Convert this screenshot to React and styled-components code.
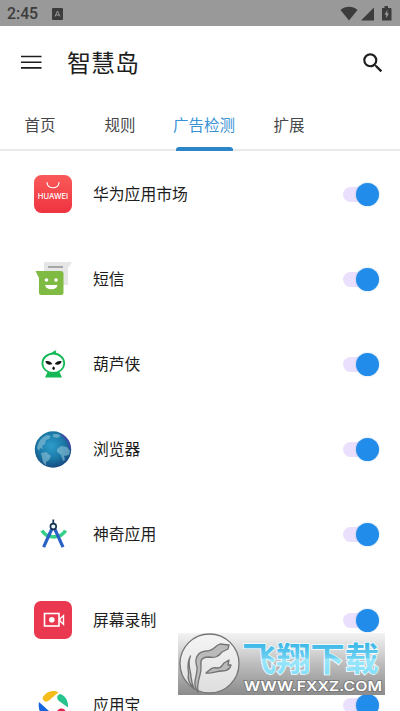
import React, { useState } from "react";
import styled, { createGlobalStyle } from "styled-components";
import { MdSearch } from "react-icons/md";

const tabs = [
  { name: "首页", width: 80 },
  { name: "规则", width: 80 },
  { name: "广告检测", width: 88 },
  { name: "扩展", width: 82 },
];

const apps = [
  { name: "华为应用市场", Icon: HuaweiIcon },
  { name: "短信", Icon: MessageIcon },
  { name: "葫芦侠", Icon: GourdIcon },
  { name: "浏览器", Icon: GlobeIcon },
  { name: "神奇应用", Icon: CompassIcon },
  { name: "屏幕录制", Icon: RecorderIcon },
  { name: "应用宝", Icon: StoreIcon },
];

function HuaweiIcon() {
  return (
    <svg width="40" height="40" viewBox="0 0 40 40">
      <defs>
        <linearGradient id="hw" x1="0" y1="0" x2="0" y2="1">
          <stop offset="0" stopColor="#fa5a59" />
          <stop offset="1" stopColor="#ee3340" />
        </linearGradient>
      </defs>
      <rect x="1" y="1" width="38" height="38" rx="7.5" fill="url(#hw)" />
      <path
        d="M14 8.5c.6 7 11.4 7 12 0"
        fill="none"
        stroke="#fff"
        strokeWidth="1.2"
        strokeLinecap="round"
      />
      <text
        x="4.8"
        y="25.2"
        textLength="30.4"
        lengthAdjust="spacingAndGlyphs"
        fontFamily="Inter, sans-serif"
        fontSize="7"
        fontWeight="500"
        fill="#fff"
      >
        HUAWEI
      </text>
    </svg>
  );
}

function MessageIcon() {
  return (
    <svg width="40" height="40" viewBox="0 0 40 40">
      <path d="M11 3h28l-4 6v17H11z" fill="#e6e6e6" />
      <path d="M15 8h15" stroke="#a6a6a6" strokeWidth="2" />
      <path
        d="M2.5 12h25.5a2.5 2.5 0 0 1 2.5 2.5v19a2.5 2.5 0 0 1-2.5 2.5H8a2 2 0 0 1-2-2V19z"
        fill="#7fbb42"
      />
      <circle cx="13.5" cy="21" r="1.8" fill="#fff" />
      <circle cx="23" cy="21" r="1.8" fill="#fff" />
      <path d="M12.2 26h12.3c-.7 5.800-11.600 5.800-12.300 0z" fill="#fff" />
    </svg>
  );
}

function GourdIcon() {
  return (
    <svg width="40" height="40" viewBox="0 0 40 40">
      <path d="M15 27h11l3 6.500H12z" fill="#15b957" />
      <path
        d="M9 17c1-5 6-7 9-8 2-1 2.500-2.200 5.500-2.800-1 1.400-1 2.300 0 2.800 4 1 6.500 4 6.800 8z"
        fill="#15b957"
      />
      <ellipse
        cx="20.300"
        cy="19.300"
        rx="10.900"
        ry="9.600"
        fill="#fff"
        stroke="#15b957"
        strokeWidth="1.800"
      />
      <path
        d="M12.400 17.200c3-.8 5.400.3 7 2.800-3 1.300-6.200.7-7-2.800zM28.700 17.200c-3-.8-5.400.3-7 2.800 3 1.300 6.200.7 7-2.800z"
        fill="#121714"
      />
      <ellipse cx="20.600" cy="24.300" rx="1.200" ry="1.700" fill="#121714" />
    </svg>
  );
}

function GlobeIcon() {
  return (
    <svg width="40" height="40" viewBox="0 0 40 40">
      <defs>
        <radialGradient id="sea" cx=".45" cy=".4" r=".62">
          <stop offset="0" stopColor="#2d9dcb" />
          <stop offset=".6" stopColor="#1a77a5" />
          <stop offset="1" stopColor="#17497f" />
        </radialGradient>
      </defs>
      <circle cx="20" cy="19.500" r="18.200" fill="url(#sea)" />
      <g fill="#8fc3d8" opacity=".6">
        <path d="M5 14c2-5 5-7 9-9l4 1-2 3-3 1-1 4-3 2 1 3-3-1-1 3-2-3z" />
        <path d="M8 23l5-1 5 4-2 4-3 2v4l-3-4-1-5z" />
        <path d="M20 4l5 0 3 2-4 2-4-1z" />
        <path d="M24 19l4-3 6 1 3 4-1 4-5 1 1 4-2 1-2-6-4-3z" />
      </g>
      <path
        d="M28 4.500c5 3 8.500 8 9 14"
        fill="none"
        stroke="#593fb1"
        strokeWidth="1.800"
        opacity=".7"
      />
    </svg>
  );
}

function CompassIcon() {
  return (
    <svg width="40" height="40" viewBox="0 0 40 40">
      <path
        d="M9 15.500c4.500 8.500 19 8.500 23.500 0"
        fill="none"
        stroke="#35cf88"
        strokeWidth="3.600"
      />
      <path
        d="M18.800 14L10.600 32.200M21.800 14l8.200 18.200"
        stroke="#2a62c8"
        strokeWidth="3.200"
      />
      <path d="M20.300 4.500v5" stroke="#17375d" strokeWidth="1.800" />
      <circle
        cx="20.300"
        cy="11.500"
        r="2.900"
        fill="#e8f3fa"
        stroke="#12304d"
        strokeWidth="1.600"
      />
    </svg>
  );
}

function RecorderIcon() {
  return (
    <svg width="40" height="40" viewBox="0 0 40 40">
      <rect x="1" y="1" width="38" height="38" rx="7" fill="#e9384f" />
      <rect
        x="11.500"
        y="13.500"
        width="14.500"
        height="12.500"
        fill="none"
        stroke="#fff"
        strokeWidth="1.600"
      />
      <circle cx="18.800" cy="19.800" r="2.800" fill="#fff" />
      <path
        d="M27 18.800l3.500-3.300v8.800L27 21z"
        fill="none"
        stroke="#fff"
        strokeWidth="1.400"
      />
    </svg>
  );
}

function StoreIcon() {
  return (
    <svg width="40" height="40" viewBox="0 0 40 40">
      <path d="M9.500 13c3-6 10-8.500 16-5.800L16 15.500c-2.500 2-5.500 1.500-6.500-2.500z" fill="#f5bd1b" />
      <path d="M27.500 9c5 2 8 7 7.500 13.500l-9-6.500c-3-2.500-2-6.500 1.500-7z" fill="#28c48e" />
      <path d="M6 17l10 9c2.500 2.500 2.500 6 .5 9-8-2-12-10-10.500-18z" fill="#1663dc" />
      <path d="M32.500 26c-1 6.500-8 10.500-15.500 9l8-10c2.500-2.200 6-2 7.500 1z" fill="#e2264d" />
    </svg>
  );
}

function MenuIcon() {
  return (
    <svg width="27" height="27" viewBox="0 0 27 27">
      <path
        d="M3 7.500h20.500M3 13.200h20.500M3 18.900h20.500"
        stroke="#1d1d20"
        strokeWidth="1.600"
      />
    </svg>
  );
}

function StatusIcons() {
  return (
    <svg width="54" height="18" viewBox="0 0 54 18" fill="#3c3c3c">
      <path d="M.5 5c5-4.200 12-4.200 17 0L9 15.500z" />
      <path d="M34 2.500v13H21z" />
      <path d="M42 3h2.500V1h3.500v2h2.500a1 1 0 0 1 1 1v11.500h-9.500V4z" />
      <path d="M47.300 5l-2.800 4.800h1.700v3.500L49 8.500h-1.700z" fill="#999" />
    </svg>
  );
}

function SiteLogo() {
  return (
    <svg width="207" height="62" viewBox="0 0 207 62">
      <defs>
        <linearGradient id="plate" x1="0" y1="0" x2="0" y2="1">
          <stop offset="0" stopColor="#f2f2f2" stopOpacity=".9" />
          <stop offset=".5" stopColor="#bdbdbd" />
          <stop offset="1" stopColor="#8b8b8b" />
        </linearGradient>
        <linearGradient id="disc" x1="0" y1="0" x2="0" y2="1">
          <stop offset="0" stopColor="#f5f5f5" />
          <stop offset="1" stopColor="#dedede" />
        </linearGradient>
        <linearGradient id="title" x1="0" y1="0" x2="0" y2="1">
          <stop offset=".2" stopColor="#38b5e6" />
          <stop offset=".52" stopColor="#6fd0f1" />
          <stop offset=".55" stopColor="#9ae6fb" />
          <stop offset="1" stopColor="#7adcf8" />
        </linearGradient>
      </defs>
      <rect width="207" height="62" fill="url(#plate)" />
      <circle
        cx="31.500"
        cy="30.500"
        r="29.500"
        fill="url(#disc)"
        stroke="#757575"
        strokeWidth="1.300"
      />
      <g
        fill="#bababa"
        stroke="#737373"
        strokeWidth="1.300"
        strokeLinecap="round"
        strokeLinejoin="round"
      >
        <path d="M20 59c-7-9 0-16-1-25-3-8 0-15 9-16 8 0 8-5 14-7l9 1-1 4-6 3c-4 5-7 6-13 5-7 0-9 3-8 9 1 10-5 14-3 26z" />
        <path d="M28 40c5-4 6-6 11-5 5 0 5-3 7-5l5-3-1 5 3 0c-1 5-5 6-9 6-6 0-10 3-16 2z" />
        <path d="M12.500 23c-3 6-1 12 0 17 1 5 0 9 4 16-6-6-7-10-6-16-1-6-1-12 2-17z" />
      </g>
      <text
        x="64"
        y="38"
        textLength="137"
        lengthAdjust="spacingAndGlyphs"
        fontFamily="'Noto Sans CJK SC', sans-serif"
        fontSize="33"
        fontWeight="700"
        fill="url(#title)"
        stroke="#f4fcff"
        strokeWidth="1.600"
        paintOrder="stroke"
      >
        飞翔下载
      </text>
      <text
        x="66"
        y="58"
        textLength="138"
        lengthAdjust="spacingAndGlyphs"
        fontFamily="Inter, sans-serif"
        fontSize="13"
        fontWeight="600"
        fill="#fff"
        stroke="#777"
        strokeWidth="1.600"
        paintOrder="stroke"
      >
        WWW.FXXZ.COM
      </text>
    </svg>
  );
}

function App() {
  const [active, setActive] = useState("广告检测");
  const [off, setOff] = useState([]);

  const toggle = (name) => {
    setOff(off.includes(name) ? off.filter((n) => n !== name) : [...off, name]);
  };

  return (
    <Screen>
      <GlobalStyle />
      <StatusBar>
        <Clock>2:45</Clock>
        <svg width="11" height="12" viewBox="0 0 11 12">
          <rect width="11" height="12" rx="1" fill="#3c3c3c" />
          <path
            d="M3 8.500L5.500 3 8 8.500M4 7h3"
            fill="none"
            stroke="#999"
            strokeWidth="1"
          />
        </svg>
        <StatusRight>
          <StatusIcons />
        </StatusRight>
      </StatusBar>
      <Header>
        <MenuIcon />
        <Title>智慧岛</Title>
        <MdSearch size={26} />
      </Header>
      <Tabs>
        {tabs.map((tab) => (
          <Tab
            key={tab.name}
            $width={tab.width}
            $active={tab.name === active}
            onClick={() => setActive(tab.name)}
          >
            {tab.name}
          </Tab>
        ))}
      </Tabs>
      {/* APP LIST */}
      <List>
        {apps.map(({ name, Icon }) => (
          <Row key={name}>
            <Icon />
            <Name>{name}</Name>
            <Switch
              role="switch"
              aria-checked={!off.includes(name)}
              $on={!off.includes(name)}
              onClick={() => toggle(name)}
            >
              <Thumb $on={!off.includes(name)} />
            </Switch>
          </Row>
        ))}
      </List>
      <Watermark>
        <SiteLogo />
      </Watermark>
    </Screen>
  );
}

export default App;

const GlobalStyle = createGlobalStyle`
  * {
    box-sizing: border-box;
  }
  body {
    margin: 0;
    background: #fff;
    font-family: Roboto, "Noto Sans CJK SC", sans-serif;
  }
  svg {
    display: block;
    flex-shrink: 0;
  }
`;

const Screen = styled.div`
  position: relative;
  display: flex;
  flex-direction: column;
  height: 711px;
  overflow: hidden;
  background: #fff;
  color: #1d1d20;
`;

const StatusBar = styled.div`
  display: flex;
  align-items: center;
  flex-shrink: 0;
  height: 26px;
  padding: 1px 6px 0 7px;
  background: #999;
`;

const Clock = styled.span`
  width: 45px;
  font-size: 15.8px;
  font-weight: 500;
  color: #3c3c3c;
`;

const StatusRight = styled.div`
  margin-left: auto;
`;

const Header = styled.header`
  display: flex;
  align-items: center;
  flex-shrink: 0;
  height: 73px;
  padding: 0 14px 0 18px;
`;

const Title = styled.h1`
  flex: 1;
  margin: 0 0 0 22px;
  padding-top: 2px;
  font-size: 24px;
  line-height: 32px;
  font-weight: 400;
`;

const Tabs = styled.nav`
  display: flex;
  flex-shrink: 0;
  height: 52px;
  border-bottom: 2px solid #ebebee;
`;

const Tab = styled.button`
  position: relative;
  width: ${(p) => p.$width}px;
  height: 52px;
  padding: 0 0 2px;
  border: 0;
  background: none;
  font-family: inherit;
  font-size: 15.5px;
  color: ${(p) => (p.$active ? "#3a93d6" : "#47474b")};
  white-space: nowrap;
  cursor: pointer;

  &::after {
    content: "";
    display: ${(p) => (p.$active ? "block" : "none")};
    position: absolute;
    left: 16px;
    right: 15px;
    bottom: 0;
    height: 4px;
    border-radius: 3px 3px 0 0;
    background: #2c85c7;
  }
`;

const List = styled.div`
  flex: 1;
  min-height: 0;
  overflow: hidden;
`;

const Row = styled.div`
  display: flex;
  align-items: center;
  height: 85.2px;
  padding: 1px 21px 0 33px;
`;

const Name = styled.span`
  flex: 1;
  margin-left: 20px;
  padding-top: 1px;
  font-size: 15.8px;
  line-height: 24px;
`;

const Switch = styled.button`
  display: flex;
  align-items: center;
  justify-content: ${(p) => (p.$on ? "flex-end" : "flex-start")};
  width: 36px;
  height: 15px;
  padding: 0;
  border: 0;
  border-radius: 8px;
  background: ${(p) => (p.$on ? "#eadffc" : "#dedee2")};
  cursor: pointer;
`;

const Thumb = styled.span`
  flex-shrink: 0;
  width: 23px;
  height: 23px;
  border-radius: 50%;
  background: ${(p) => (p.$on ? "#218cea" : "#fafafa")};
  box-shadow: 0 0 2px rgb(60 130 190 / 0.4);
`;

const Watermark = styled.div`
  position: absolute;
  left: 178px;
  top: 633px;
  pointer-events: none;
`;
